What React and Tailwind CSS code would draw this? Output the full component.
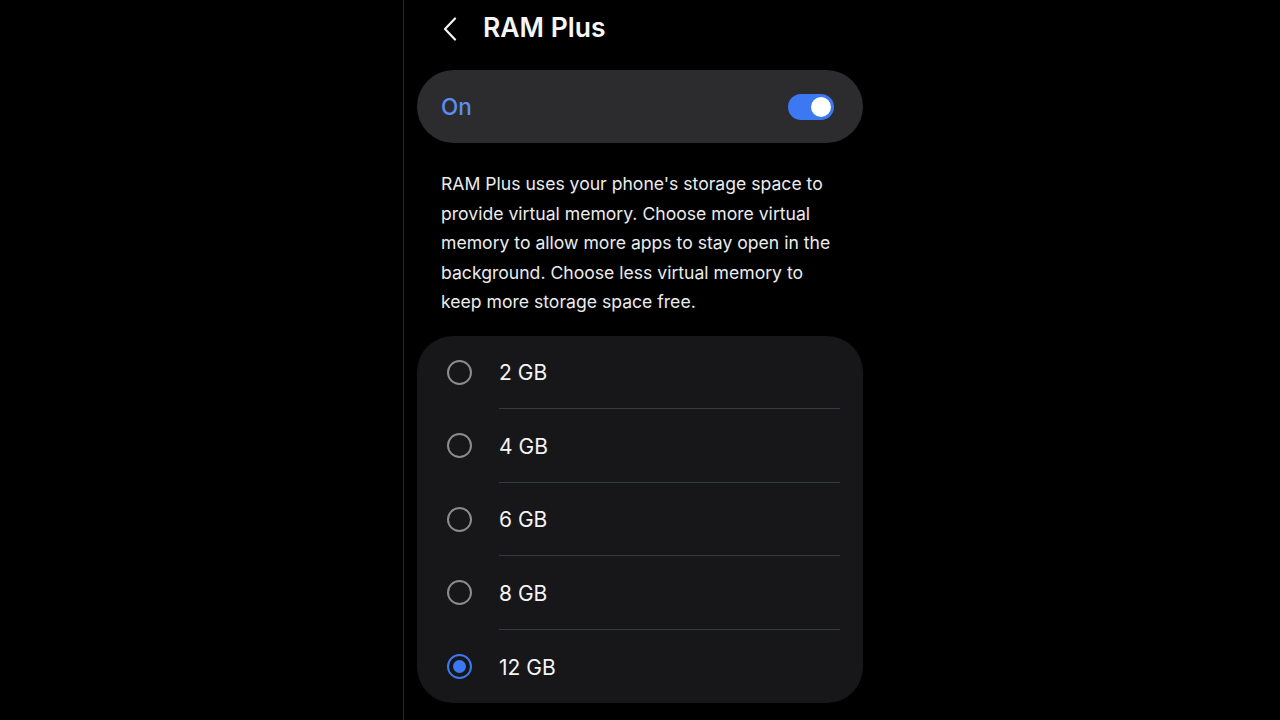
const sizes = ['2 GB', '4 GB', '6 GB', '8 GB', '12 GB'];

const Radio = ({ checked }) => (
  <span
    className={`flex h-[25px] w-[25px] shrink-0 items-center justify-center rounded-full border-2 ${
      checked ? 'border-[#3b78f2]' : 'border-[#8c8c8e]'
    }`}
  >
    {checked && <span className="h-[13px] w-[13px] rounded-full bg-[#3b78f2]" />}
  </span>
);

export default function App() {
  const selected = '12 GB';

  return (
    <div className="flex h-[720px] w-[1280px] overflow-hidden bg-black font-['Inter','Liberation_Sans',sans-serif] text-white">
      <div className="w-[403px] shrink-0" />
      <div className="w-[477px] shrink-0 border-l border-[#1d2b3b] pl-[13px]">
        <div className="w-[446px]">
          {/* Header */}
          <div className="flex h-[56px] items-center pl-[26px]">
            <svg width="14" height="24" viewBox="0 0 14 24" fill="none" className="mt-[1px]">
              <path d="M12 1.5 2 12l10 10.5" stroke="#f4f4f4" strokeWidth="2.2" strokeLinecap="round" strokeLinejoin="round" />
            </svg>
            <h1 className="ml-[26px] text-[26.5px] font-semibold text-[#f6f6f6]">RAM Plus</h1>
          </div>

          {/* Master switch */}
          <div className="mt-[14px] flex h-[73px] items-center justify-between rounded-full bg-[#2c2c2e] pl-[24px] pr-[29px]">
            <span className="mt-[1px] text-[22.5px] font-medium text-[#5b8ef2]">On</span>
            <span className="flex h-[26px] w-[46px] items-center justify-end rounded-full bg-[#3b78f2] pr-[3px]">
              <span className="h-[20px] w-[20px] rounded-full bg-white" />
            </span>
          </div>

          {/* Description */}
          <p className="mt-[26px] pl-[24px] pr-[20px] text-[17.6px] leading-[29.5px] text-[#ececec]">
            RAM Plus uses your phone's storage space to provide virtual memory. Choose more virtual memory to allow more apps to stay open in the background. Choose less virtual memory to keep more storage space free.
          </p>

          {/* Options */}
          <div className="mt-[19px] overflow-hidden rounded-[36px] bg-[#171719]">
            {sizes.map((size, i) => (
              <div key={size} className="flex h-[73.5px] items-center pl-[30px]">
                <Radio checked={size === selected} />
                <div
                  className={`ml-[27px] mr-[23px] flex h-full flex-1 items-center ${
                    i < sizes.length - 1 ? 'border-b border-[#323a44]' : ''
                  }`}
                >
                  <span className="mt-[2px] text-[21px] text-[#f4f4f4]">{size}</span>
                </div>
              </div>
            ))}
          </div>
        </div>
      </div>
    </div>
  );
}
